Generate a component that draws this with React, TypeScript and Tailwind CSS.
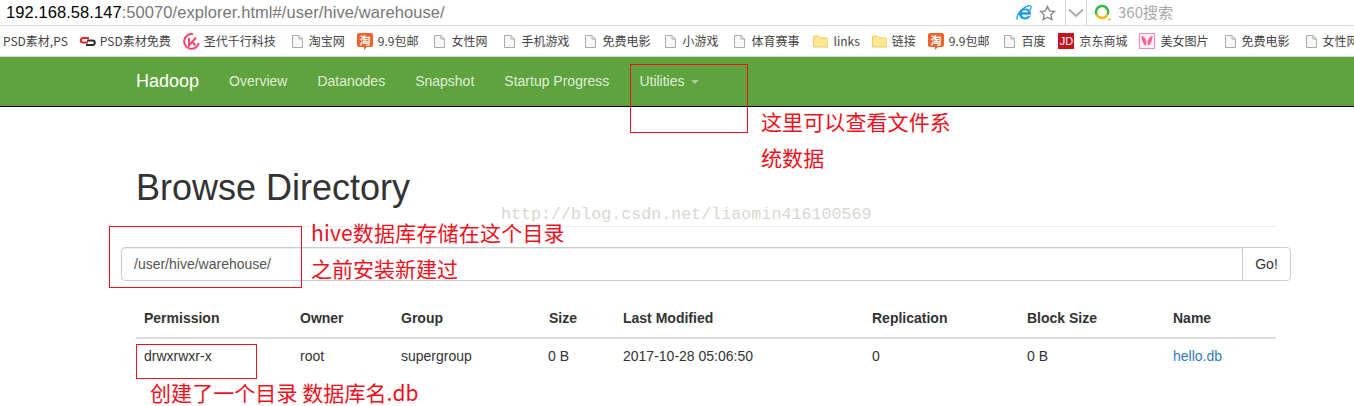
const sans = "font-['Liberation_Sans','Noto_Sans_CJK_SC',sans-serif]";
const ui = "font-['Noto_Sans_CJK_SC','Noto_Sans',sans-serif]";

function Doc() {
  return (
    <svg width="13" height="15" viewBox="0 0 13 15" className="mr-[5px] shrink-0">
      <path d="M1.5 1.5h6.5l3.5 3.5v8.5h-10z" fill="#f8f8f8" stroke="#aaa" />
      <path d="M8 1.5v3.5h3.5" fill="none" stroke="#aaa" />
    </svg>
  );
}
function Folder() {
  return (
    <svg width="15" height="13" viewBox="0 0 15 13" className="mr-[5px] shrink-0">
      <path d="M.5 2a1 1 0 0 1 1-1h4l1.5 2h7a1 1 0 0 1 1 1v8h-14.500z" fill="#fde992" stroke="#f3c766" />
    </svg>
  );
}
function Taobao() {
  return (
    <svg width="16" height="17" viewBox="0 0 16 17" className="mr-[5px] shrink-0">
      <path d="M2 0h12a2 2 0 0 1 2 2v10a2 2 0 0 1-2 2H10l-3 3v-3H2a2 2 0 0 1-2-2V2a2 2 0 0 1 2-2z" fill="#f2622a" />
      <text x="8" y="11.500" textAnchor="middle" fontSize="11" fontWeight="700" fill="#fff" fontFamily="'Noto Sans CJK SC', sans-serif">淘</text>
    </svg>
  );
}
function Chain() {
  return (
    <svg width="17" height="11" viewBox="0 0 17 11" className="mr-[4px] shrink-0">
      <path d="M10 2H4a2 2 0 0 0 0 4.500h5" fill="none" stroke="#e0262c" strokeWidth="2" />
      <path d="M7 9h6.500a2 2 0 0 0 0-4.500H8" fill="none" stroke="#2b2b2b" strokeWidth="2" />
    </svg>
  );
}
function Kv() {
  return (
    <svg width="17" height="17" viewBox="0 0 17 17" className="mr-[4px] shrink-0">
      <path d="M10 1.200A7.400 7.400 0 1 0 15.800 10" fill="none" stroke="#ee4a72" strokeWidth="2" />
      <path d="M6 5v7.500l7-8M9 8.500l3.500 4" fill="none" stroke="#ee4a72" strokeWidth="2" />
    </svg>
  );
}
function Jd() {
  return (
    <div className="mr-[5px] flex h-4 w-4 shrink-0 items-center justify-center bg-[#c4121f] font-['Liberation_Sans',sans-serif] text-[11px] leading-none text-white">
      JD
    </div>
  );
}
function Butterfly() {
  return (
    <svg width="16" height="16" viewBox="0 0 16 16" className="mr-[5px] shrink-0">
      <rect x=".5" y=".5" width="15" height="15" fill="#fdeef3" stroke="#ef8fab" />
      <path d="M7.500 8C6 4.500 4 3 2.500 3 2.500 7 4 11.500 7 12.500zM8.500 8c1.500-3.500 3.500-5 5-5C13.500 7 12 11.500 9 12.500z" fill="#f0669a" />
    </svg>
  );
}

const bookmarks: [string, string, string][] = [
  ["none", "PSD素材,PS", "mr-[11px]"],
  ["chain", "PSD素材免费", "mr-[12px]"],
  ["kv", "圣代千行科技", "mr-[15px]"],
  ["doc", "淘宝网", "mr-[12px]"],
  ["tb", "9.9包邮", "mr-[15px]"],
  ["doc", "女性网", "mr-[16px]"],
  ["doc", "手机游戏", "mr-[15px]"],
  ["doc", "免费电影", "mr-[14px]"],
  ["doc", "小游戏", "mr-[15px]"],
  ["doc", "体育赛事", "mr-[14px]"],
  ["folder", "links", "mr-[12px]"],
  ["folder", "链接", "mr-[12px]"],
  ["tb", "9.9包邮", "mr-[14px]"],
  ["doc", "百度", "mr-[13px]"],
  ["jd", "京东商城", "mr-[12px]"],
  ["bf", "美女图片", "mr-[15px]"],
  ["doc", "免费电影", "mr-[15px]"],
  ["doc", "女性网", ""],
];

function BmIcon({ k }: { k: string }) {
  if (k === "doc") return <Doc />;
  if (k === "folder") return <Folder />;
  if (k === "tb") return <Taobao />;
  if (k === "chain") return <Chain />;
  if (k === "kv") return <Kv />;
  if (k === "jd") return <Jd />;
  if (k === "bf") return <Butterfly />;
  return null;
}

const cols = "grid grid-cols-[164px_101px_148px_74px_249px_155px_146px_103px]";
const heads = ["Permission", "Owner", "Group", "Size", "Last Modified", "Replication", "Block Size", "Name"];
const cells = ["drwxrwxr-x", "root", "supergroup", "0 B", "2017-10-28 05:06:50", "0", "0 B"];

export default function App() {
  return (
    <div className={`relative h-[406px] w-[1354px] overflow-hidden bg-white ${sans}`}>
      {/* address bar */}
      <div className="flex h-[26px] items-center border-b border-[#d9d9d9] bg-white">
        <div className="pl-[6px] text-[16.500px] leading-none tracking-[0.07px] text-[#777]">
          <span className="text-black">192.168.58.147</span>:50070/explorer.html#/user/hive/warehouse/
        </div>
        <div className="ml-auto flex h-full items-center">
          <svg width="16" height="18" viewBox="0 0 16 18" className="mr-[7px]">
            <path d="M1.500 15.500c-1-2 .5-6 4-9.500 3.500-3.500 7.500-5 9-4 1 1 0 3.500-.8 4.500" fill="none" stroke="#1c9ce8" strokeWidth="1.400" />
            <path d="M15 10.800H6c.2 3 4.500 3.500 6.200 1h2.600c-2 5.200-11.300 5-11.800-1.800C3 5.500 8 3.500 11.500 4.800 14 6 15 8 15 10.800zM6 8.300h6c-.3-2.800-5.500-2.800-6 0z" fill="#1c9ce8" fillRule="evenodd" />
          </svg>
          <svg width="17" height="16" viewBox="0 0 17 16" className="mr-[9px]">
            <path d="M8.500 1.500l2.100 4.400 4.900.6-3.600 3.300.9 4.800-4.300-2.400-4.300 2.400.9-4.800-3.600-3.300 4.900-.6z" fill="none" stroke="#8a8a8a" strokeWidth="1.400" />
          </svg>
          <div className="h-full w-px bg-[#d9d9d9]" />
          <svg width="20" height="10" viewBox="0 0 20 10">
            <path d="M3 1.500l7 6.500 7-6.500" fill="none" stroke="#aaa" strokeWidth="1.800" />
          </svg>
          <div className="h-full w-px bg-[#d9d9d9]" />
          <svg width="17" height="17" viewBox="0 0 17 17" className="ml-[7px] mr-[7px]">
            <path d="M2.600 10.500A6 6 0 1 1 13.500 10.500" fill="none" stroke="#3cb34a" strokeWidth="2.400" />
            <path d="M2.600 10.500a6 6 0 0 0 10.900 0" fill="none" stroke="#f7b912" strokeWidth="2.400" />
            <circle cx="15.500" cy="15.500" r="1.200" fill="#f7b912" />
          </svg>
          <div className={`w-[236px] text-[15px] text-[#a8a8a8] ${ui}`}>360搜索</div>
        </div>
      </div>

      {/* bookmarks */}
      <div className={`flex h-[31px] items-center overflow-hidden whitespace-nowrap border-b border-[#d9d9d9] bg-white pl-[3px] text-[12px] leading-none text-[#444] ${ui}`}>
        {bookmarks.map(([k, t, m], i) => (
          <div key={i} className={`flex shrink-0 items-center ${m}`}>
            <BmIcon k={k} />
            <span>{t}</span>
          </div>
        ))}
      </div>

      {/* navbar */}
      <div className="flex h-[50px] items-center border-b border-black bg-[#5fa33e] pl-[136px] text-[14px] text-[#dff0d8]">
        <div className="mr-[15px] text-[18px] text-white">Hadoop</div>
        <div className="px-[15px]">Overview</div>
        <div className="px-[15px]">Datanodes</div>
        <div className="px-[15px]">Snapshot</div>
        <div className="px-[15px]">Startup Progress</div>
        <div className="flex items-center px-[15px]">
          Utilities
          <div className="ml-[6px] mt-px h-0 w-0 border-x-4 border-t-4 border-x-transparent border-t-[#a9c99a]" />
        </div>
      </div>

      {/* main */}
      <div className="text-[14px] text-[#333]">
        <div className="ml-[136px] w-[1140px] border-b border-[#eee] pb-[16px] pt-[58px]">
          <h1 className="text-[36px] font-normal leading-[45px]">Browse Directory</h1>
        </div>
        <div className="ml-[121px] mt-[20px] flex h-[34px] w-[1170px]">
          <div className="flex-1 rounded-l border border-[#ccc] px-3 py-[6px] leading-5 text-[#555] shadow-[inset_0_1px_1px_rgba(0,0,0,0.075)]">
            /user/hive/warehouse/
          </div>
          <div className="-ml-px flex w-[49px] items-center justify-center rounded-r border border-[#ccc]">Go!</div>
        </div>
        <div className="ml-[136px] mt-[20px] w-[1140px]">
          <div className={`${cols} h-[38px] items-center border-b-2 border-[#ddd] pb-px font-bold`}>
            {heads.map((h, i) => (
              <div key={h} className={i === 0 ? "pl-2" : ""}>{h}</div>
            ))}
          </div>
          <div className={`${cols} h-[35px] items-center`}>
            {cells.map((c, i) => (
              <div key={i} className={i === 0 ? "pl-2" : i === 3 ? "-ml-px" : ""}>{c}</div>
            ))}
            <div className="text-[#337ab7]">hello.db</div>
          </div>
        </div>
      </div>

      {/* watermark */}
      <div className="absolute left-[501px] top-[205px] font-['Liberation_Mono',monospace] text-[16.700px] leading-5 text-[#d8d8d0]">
        http://blog.csdn.net/liaomin416100569
      </div>

      {/* annotations */}
      <div className="absolute left-[630px] top-[64px] h-[69px] w-[118px] border border-[#f01020]" />
      <div className="absolute left-[109px] top-[226px] h-[62px] w-[193px] border border-[#f01020]" />
      <div className="absolute left-[136px] top-[344px] h-[35px] w-[121px] border border-[#f01020]" />
      <div className={`absolute left-[761px] top-[103px] w-[200px] text-[21px] leading-[36px] tracking-[0.1px] text-[#f01020] ${ui}`}>
        这里可以查看文件系<br />统数据
      </div>
      <div className={`absolute left-[311px] top-[214px] whitespace-nowrap text-[21px] leading-[36px] text-[#f01020] ${ui}`}>
        <span className="tracking-[0.2px]">hive数据库存储在这个目录</span><br />之前安装新建过
      </div>
      <div className={`absolute left-[150px] top-[377px] whitespace-nowrap text-[21px] leading-[30px] tracking-[0.07px] text-[#f01020] ${ui}`}>
        创建了一个目录 数据库名.db
      </div>
    </div>
  );
}
